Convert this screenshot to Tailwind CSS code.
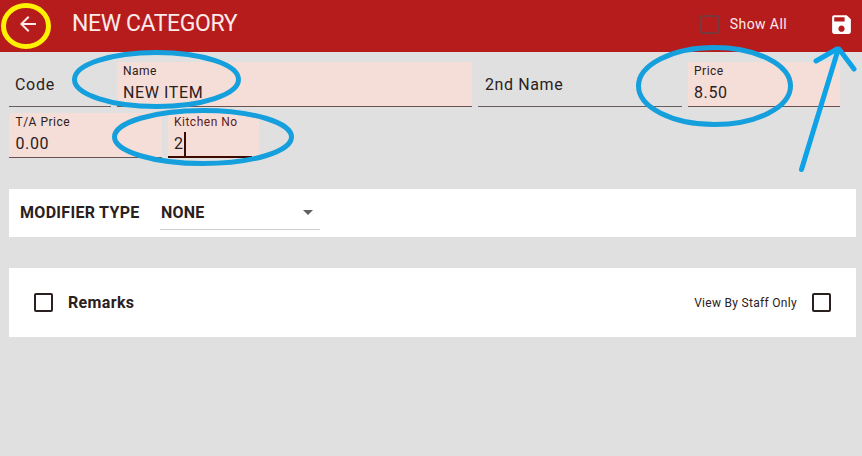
<!DOCTYPE html>
<html lang="en">
<head>
<meta charset="utf-8">
<title>New Category</title>
<script src="https://cdn.jsdelivr.net/npm/@tailwindcss/browser@4"></script>
</head>
<body class="relative h-[456px] w-[862px] overflow-hidden bg-[#e0e0e0] font-[Roboto,sans-serif] text-[#2b2020]">
<header class="flex h-[52px] items-center bg-[#b71c1c] pb-[4px] text-[#fdeaea]">
  <svg class="ml-[16px] size-[24px] shrink-0" viewBox="0 0 24 24" fill="currentColor"><path d="M20 11H7.830l5.590-5.590L12 4l-8 8 8 8 1.410-1.410L7.830 13H20v-2z"/></svg>
  <h1 class="ml-[32px] text-[23px] leading-[28px] tracking-[-0.4px] whitespace-nowrap">NEW CATEGORY</h1>
  <label class="ml-auto flex items-center">
    <span class="size-[19px] rounded-[3px] border-2 border-[#753a3c]"></span>
    <span class="ml-[11px] text-[14px] leading-[20px] tracking-[0.4px]">Show All</span>
  </label>
  <svg class="mr-[8px] ml-[42px] size-[25px]" viewBox="0 0 24 24" fill="white"><path d="M17 3H5c-1.100 0-2 .9-2 2v14c0 1.100.9 2 2 2h14c1.100 0 2-.9 2-2V7l-4-4zm-5 16c-1.660 0-3-1.340-3-3s1.340-3 3-3 3 1.340 3 3-1.340 3-3 3zm3-10H5V5h10v4z"/></svg>
</header>
<main class="px-[9px] pt-[10px]">
  <div class="flex gap-[6px]">
    <div class="flex h-[45px] w-[102px] items-center border-b border-[#6b5c5c] pt-[2px] pl-[6px] text-[16px] tracking-[0.7px]">Code</div>
    <div class="h-[45px] w-[355px] rounded-t-[3px] border-b border-[#6b5252] bg-[#f5ded8] pt-[2px] pl-[6px]">
      <div class="text-[12px] leading-[15px] tracking-[0.5px]">Name</div>
      <div class="mt-[3px] text-[16px] leading-[22px] tracking-[0.6px]">NEW ITEM</div>
    </div>
    <div class="flex h-[45px] w-[204px] items-center border-b border-[#6b5c5c] pt-[2px] pl-[7px] text-[16px] tracking-[0.6px]">2nd Name</div>
    <div class="h-[45px] w-[152px] rounded-t-[3px] border-b border-[#6b5252] bg-[#f5ded8] pt-[2px] pl-[6px]">
      <div class="text-[12px] leading-[15px] tracking-[0.5px]">Price</div>
      <div class="mt-[3px] text-[16px] leading-[22px] tracking-[0.6px]">8.50</div>
    </div>
  </div>
  <div class="mt-[6px] flex gap-[6px]">
    <div class="h-[45px] w-[153px] rounded-t-[3px] border-b border-[#6b5252] bg-[#f5ded8] pt-[2px] pl-[6.500px]">
      <div class="text-[12px] leading-[15px] tracking-[0.5px]">T/A Price</div>
      <div class="mt-[3px] text-[16px] leading-[22px] tracking-[0.6px]">0.00</div>
    </div>
    <div class="flex h-[45px] w-[91px] flex-col rounded-t-[3px] bg-[#f5ded8] pt-[2px]">
      <div class="pl-[6px] text-[12px] leading-[15px] tracking-[0.5px] text-[#5a2020]">Kitchen No</div>
      <div class="mt-[3px] flex h-[22px] items-start pl-[6px] text-[16px] leading-[22px]">2<span class="-mt-px ml-px h-[24px] w-[2px] bg-[#3e0a00]"></span></div>
      <div class="mt-auto h-[2px] w-[84px] bg-[#3e0a00]"></div>
    </div>
  </div>
  <section class="mt-[31px] mr-[-3px] flex h-[48px] items-center bg-white pl-[11px] text-[16px] font-bold">
    <span class="w-[140px] tracking-[0.3px]">MODIFIER TYPE</span>
    <div class="mt-[7px] flex h-[34px] w-[160px] items-center justify-between self-start border-b border-[#cfcfcf] pl-[1px]">
      <span class="tracking-[0.2px]">NONE</span>
      <svg class="mr-[7px] h-[5px] w-[10px]" viewBox="0 0 10 5" fill="#616161"><path d="M0 0h10L5 5z"/></svg>
    </div>
  </section>
  <section class="mt-[31px] mr-[-3px] flex h-[69px] items-center bg-white pr-[25px] pl-[25px]">
    <span class="size-[19px] rounded-[2px] border-2 border-[#2b2020]"></span>
    <span class="ml-[15px] text-[16px] font-bold tracking-[0.35px]">Remarks</span>
    <span class="ml-auto text-[12px] tracking-[0.3px]">View By Staff Only</span>
    <span class="ml-[15px] size-[19px] rounded-[2px] border-2 border-[#2b2020]"></span>
  </section>
</main>
<svg class="pointer-events-none absolute inset-0" width="862" height="456" fill="none" stroke="#159fdc" stroke-width="5" stroke-linecap="round" stroke-linejoin="round">
  <ellipse cx="26" cy="26" rx="22.500" ry="20.500" stroke="#fff200"/>
  <ellipse cx="156.500" cy="79.500" rx="82" ry="27"/>
  <ellipse cx="203" cy="137" rx="88.500" ry="26.500"/>
  <ellipse cx="714.500" cy="86" rx="76" ry="38.500"/>
  <path stroke="#0ea2e6" d="M801.500 169.500L838 50M816 61l21-12 2 0 15 20"/>
</svg>
</body>
</html>
